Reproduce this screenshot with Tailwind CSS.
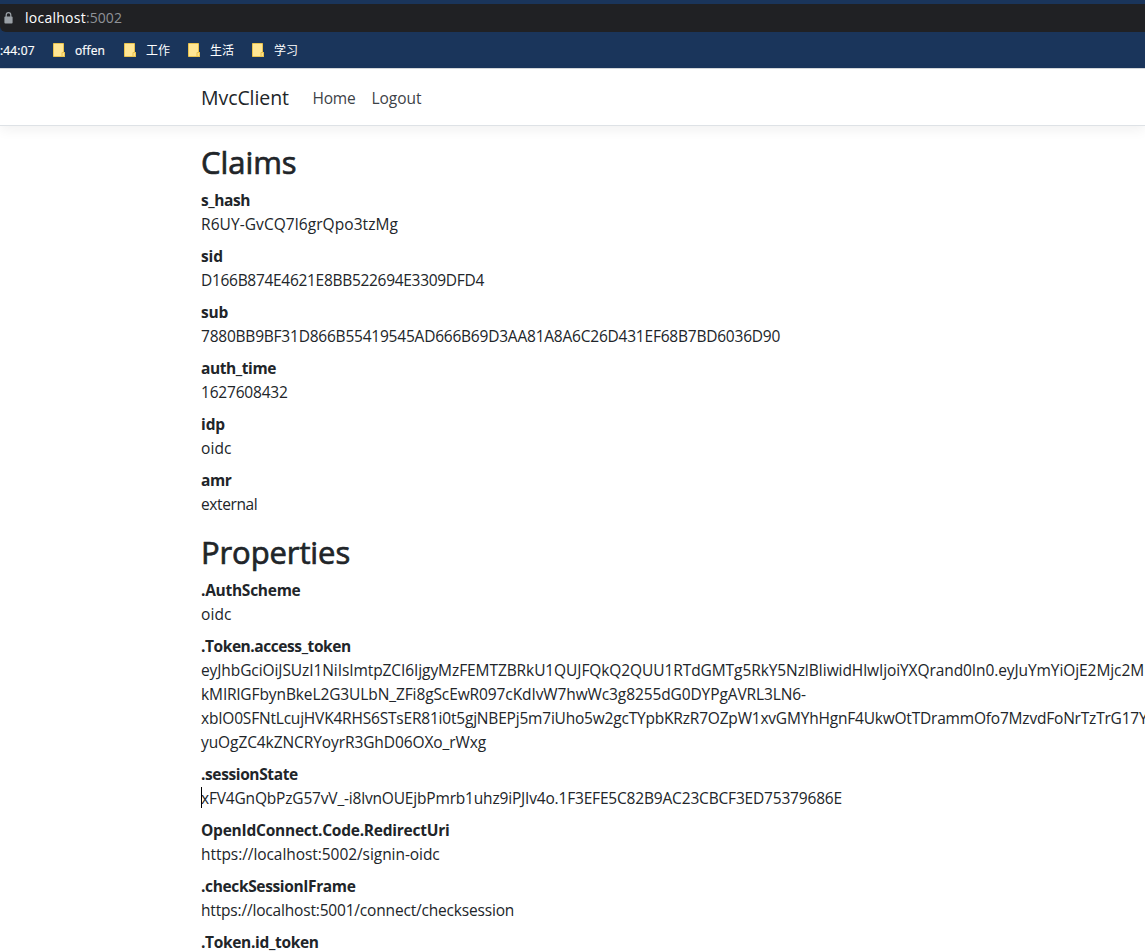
<!DOCTYPE html>
<html lang="en">
<head>
<meta charset="utf-8">
<title>MvcClient</title>
<script src="https://cdn.jsdelivr.net/npm/@tailwindcss/browser@4"></script>
</head>
<body class="flex h-[951px] w-[1145px] flex-col overflow-hidden bg-white font-['Open_Sans','Noto_Sans_CJK_SC',sans-serif] text-[#212529]">
  <!-- Browser chrome -->
  <div class="shrink-0 border-b border-[#d5d8dc] bg-[#1a355b] pt-1">
    <div class="flex h-7 items-center rounded-bl-[6px] bg-[#202124] pl-1 text-[14px] leading-7">
      <svg class="mr-3 h-3 w-[9px]" viewBox="0 0 9 12" fill="none"><path d="M2.2 5.5V3a2.3 2.3 0 0 1 4.6 0v2.5" stroke="#9aa0a6" stroke-width="1.2"/><rect x=".4" y="4.4" width="8.2" height="7" rx="1" fill="#9aa0a6"/></svg>
      <span class="tracking-[0.26px] text-white">localhost</span><span class="tracking-[0.06px] text-[#8f9398]">:5002</span>
    </div>
    <div class="flex h-9 items-center text-[12px] leading-[34px] text-white">
      <span class="w-[53px] pt-0.5 tracking-[0.16px] [-webkit-text-stroke:0.2px_white]">:44:07</span>
      <svg class="mr-[10px] h-[14px] w-3" viewBox="0 0 12 14"><path d="M.5.5h10v9h1v4H.5z" fill="#ffe694" stroke="#e9c34e"/><path d="M9 13.5V9.5h2.5v4z" fill="#ffe08a" stroke="#e9c34e"/></svg>
      <span class="w-[49px] pt-0.5 tracking-[0.12px] [-webkit-text-stroke:0.2px_white]">offen</span>
      <svg class="mr-[10px] h-[14px] w-3" viewBox="0 0 12 14"><path d="M.5.5h10v9h1v4H.5z" fill="#ffe694" stroke="#e9c34e"/><path d="M9 13.5V9.5h2.5v4z" fill="#ffe08a" stroke="#e9c34e"/></svg>
      <span class="w-[42px] pt-0.5">工作</span>
      <svg class="mr-[10px] h-[14px] w-3" viewBox="0 0 12 14"><path d="M.5.5h10v9h1v4H.5z" fill="#ffe694" stroke="#e9c34e"/><path d="M9 13.5V9.5h2.5v4z" fill="#ffe08a" stroke="#e9c34e"/></svg>
      <span class="w-[42px] pt-0.5">生活</span>
      <svg class="mr-[10px] h-[14px] w-3" viewBox="0 0 12 14"><path d="M.5.5h10v9h1v4H.5z" fill="#ffe694" stroke="#e9c34e"/><path d="M9 13.5V9.5h2.5v4z" fill="#ffe08a" stroke="#e9c34e"/></svg>
      <span class="pt-0.5">学习</span>
    </div>
  </div>

  <header class="flex h-[57px] shrink-0 items-center border-b border-[#dee2e6] bg-white pl-[201px] shadow-[0_4px_12px_rgba(0,0,0,0.06)]">
    <a class="w-[111.5px] pt-px text-[19.5px] leading-[30px] tracking-[-0.07px]">MvcClient</a>
    <nav class="flex pt-0.5 text-[15.5px] leading-6 text-[#3d4247]">
      <a class="w-[59px] tracking-[-0.2px]">Home</a>
      <a class="tracking-[-0.03px]">Logout</a>
    </nav>
  </header>

  <main class="pt-4 pl-[201px] text-[15.5px] leading-6 whitespace-nowrap">
    <h2 class="mb-[7px] h-[39px] text-[31px] leading-[41px] tracking-[-0.06px] [-webkit-text-stroke:0.7px_#212529]">Claims</h2>
    <dl class="mb-4 flex flex-col gap-2">
      <div><dt class="font-bold tracking-[-0.42px]">s_hash</dt><dd class="tracking-[0.07px]">R6UY-GvCQ7l6grQpo3tzMg</dd></div>
      <div><dt class="font-bold tracking-[-0.08px]">sid</dt><dd class="tracking-[-0.3px]">D166B874E4621E8BB522694E3309DFD4</dd></div>
      <div><dt class="font-bold tracking-[-0.23px]">sub</dt><dd class="tracking-[-0.22px]">7880BB9BF31D866B55419545AD666B69D3AA81A8A6C26D431EF68B7BD6036D90</dd></div>
      <div><dt class="font-bold tracking-[-0.41px]">auth_time</dt><dd class="tracking-[-0.2px]">1627608432</dd></div>
      <div><dt class="font-bold tracking-[-0.1px]">idp</dt><dd class="tracking-[0.1px]">oidc</dd></div>
      <div><dt class="font-bold tracking-[-0.37px]">amr</dt><dd class="tracking-[-0.4px]">external</dd></div>
    </dl>

    <h2 class="mb-[7px] h-[39px] text-[31px] leading-[41px] tracking-[-0.1px] [-webkit-text-stroke:0.7px_#212529]">Properties</h2>
    <dl class="flex flex-col gap-2">
      <div><dt class="font-bold tracking-[-0.27px]">.AuthScheme</dt><dd class="tracking-[0.1px]">oidc</dd></div>
      <div>
        <dt class="font-bold tracking-[-0.43px]">.Token.access_token</dt>
        <dd class="tracking-[-0.086px]">eyJhbGciOiJSUzI1NiIsImtpZCI6IjgyMzFEMTZBRkU1QUJFQkQ2QUU1RTdGMTg5RkY5NzlBIiwidHlwIjoiYXQrand0In0.eyJuYmYiOjE2Mjc2M</dd>
        <dd class="tracking-[-0.104px]">kMIRlGFbynBkeL2G3ULbN_ZFi8gScEwR097cKdIvW7hwWc3g8255dG0DYPgAVRL3LN6-</dd>
        <dd class="tracking-[-0.2px]">xbIO0SFNtLcujHVK4RHS6STsER81i0t5gjNBEPj5m7iUho5w2gcTYpbKRzR7OZpW1xvGMYhHgnF4UkwOtTDrammOfo7MzvdFoNrTzTrG17Y</dd>
        <dd class="tracking-[-0.09px]">yuOgZC4kZNCRYoyrR3GhD06OXo_rWxg</dd>
      </div>
      <div><dt class="font-bold tracking-[-0.38px]">.sessionState</dt><dd class="relative tracking-[-0.18px]"><span class="absolute top-px left-0 h-[21px] w-px bg-black"></span>xFV4GnQbPzG57vV_-i8lvnOUEjbPmrb1uhz9iPJIv4o.1F3EFE5C82B9AC23CBCF3ED75379686E</dd></div>
      <div><dt class="font-bold tracking-[-0.24px]">OpenIdConnect.Code.RedirectUri</dt><dd class="tracking-[-0.06px]">https://localhost:5002/signin-oidc</dd></div>
      <div><dt class="font-bold tracking-[-0.36px]">.checkSessionIFrame</dt><dd class="tracking-[-0.18px]">https://localhost:5001/connect/checksession</dd></div>
      <div><dt class="font-bold tracking-[-0.33px]">.Token.id_token</dt></div>
    </dl>
  </main>
</body>
</html>
